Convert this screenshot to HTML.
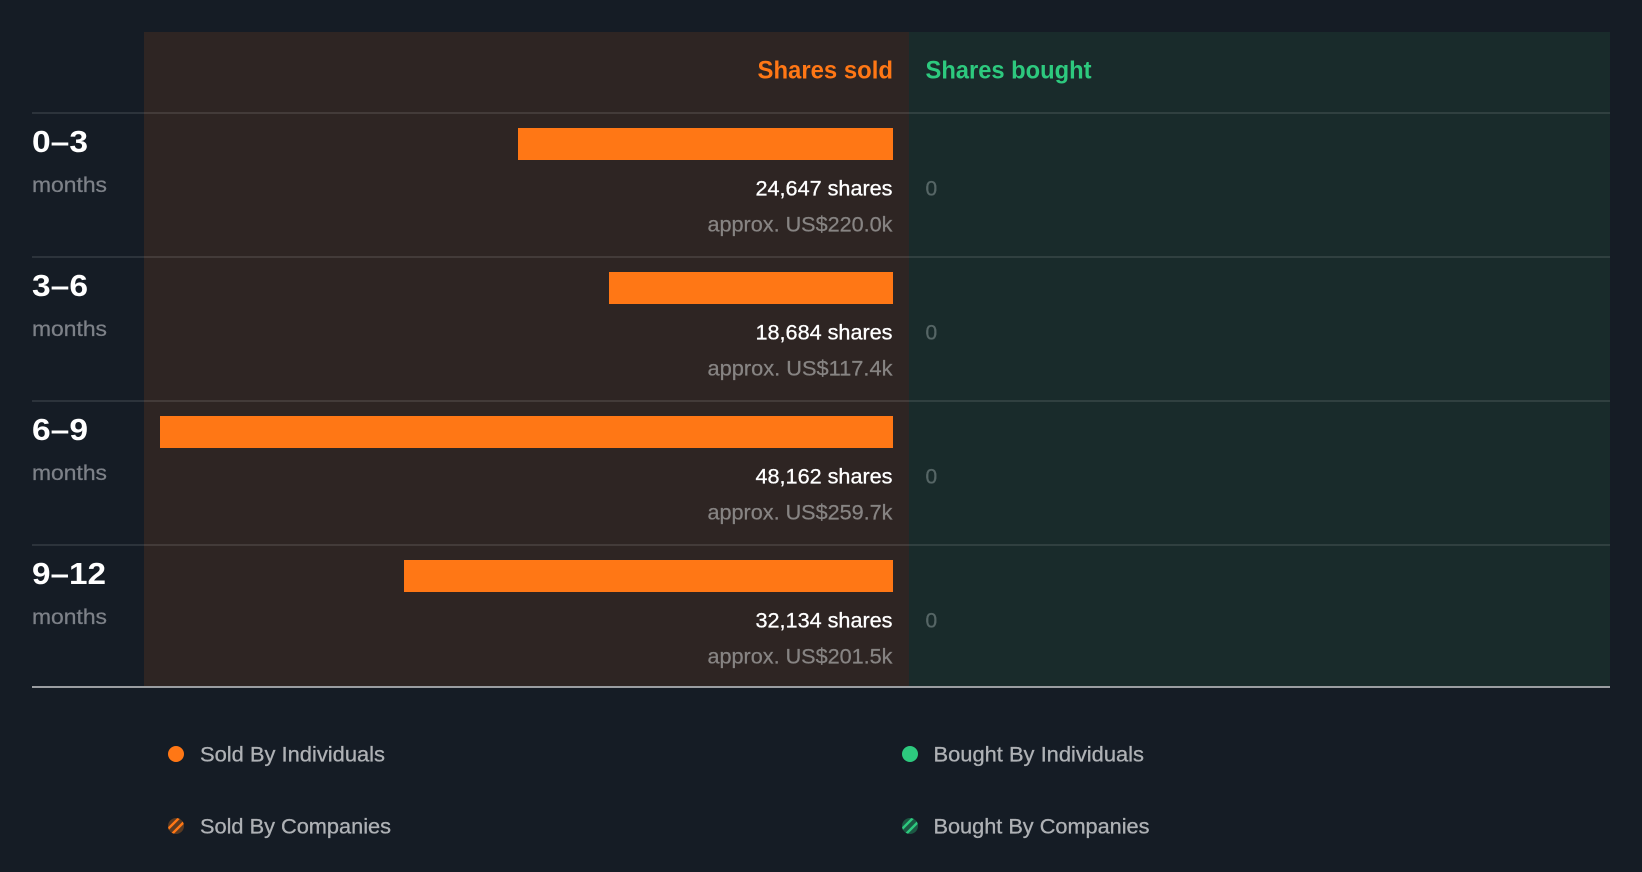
<!DOCTYPE html>
<html><head><meta charset="utf-8"><style>
html,body{margin:0;padding:0;background:#151c25;width:1642px;height:872px;overflow:hidden}
svg{display:block}
text{font-family:"Liberation Sans",sans-serif}
.h{font-size:25px;font-weight:bold}
.r{font-size:31px;font-weight:bold;fill:#fff}
.m{font-size:21px;fill:#7d8188;stroke:#7d8188;stroke-width:.25px}
.s{font-size:21px;fill:#fff;stroke:#fff;stroke-width:.3px}
.a{font-size:21px;fill:#878483;stroke:#878483;stroke-width:.25px}
.z{font-size:21px;fill:#566666;stroke:#566666;stroke-width:.3px}
.l{font-size:21px;fill:#aeb1b5;stroke:#aeb1b5;stroke-width:.3px}
</style></head><body>
<svg width="1642" height="872" viewBox="0 0 1642 872" xmlns="http://www.w3.org/2000/svg">
<defs>
<clipPath id="c1"><circle cx="176" cy="826" r="8"/></clipPath>
<clipPath id="c2"><circle cx="910" cy="826" r="8"/></clipPath>
</defs>
<rect width="1642" height="872" fill="#151c25"/>
<rect x="144" y="32" width="765" height="655" fill="#2e2523"/>
<rect x="909" y="32" width="701" height="655" fill="#192b2b"/>
<g fill="#fff" fill-opacity=".1">
<rect x="32" y="112" width="1578" height="2"/>
<rect x="32" y="256" width="1578" height="2"/>
<rect x="32" y="400" width="1578" height="2"/>
<rect x="32" y="544" width="1578" height="2"/>
</g>
<rect x="32" y="686" width="1578" height="2" fill="#9a9da1"/>

<text class="h" x="757.5" y="78.5" textLength="135.5" lengthAdjust="spacingAndGlyphs" fill="#ff7715">Shares sold</text>
<text class="h" x="925.5" y="78.5" textLength="166" lengthAdjust="spacingAndGlyphs" fill="#2dc97e">Shares bought</text>

<g fill="#ff7715">
<rect x="518" y="128" width="375" height="32"/>
<rect x="609" y="272" width="284" height="32"/>
<rect x="160" y="416" width="733" height="32"/>
<rect x="404" y="560" width="489" height="32"/>
</g>

<text class="r" x="32" y="152" textLength="56" lengthAdjust="spacingAndGlyphs">0–3</text>
<text class="m" x="32" y="192" textLength="75" lengthAdjust="spacingAndGlyphs">months</text>
<text class="s" x="755.5" y="195.5" textLength="137" lengthAdjust="spacingAndGlyphs">24,647 shares</text>
<text class="a" x="707.5" y="231.5" textLength="185" lengthAdjust="spacingAndGlyphs">approx. US$220.0k</text>
<text class="z" x="925.5" y="195.5">0</text>

<text class="r" x="32" y="296" textLength="56" lengthAdjust="spacingAndGlyphs">3–6</text>
<text class="m" x="32" y="336" textLength="75" lengthAdjust="spacingAndGlyphs">months</text>
<text class="s" x="755.5" y="339.5" textLength="137" lengthAdjust="spacingAndGlyphs">18,684 shares</text>
<text class="a" x="707.5" y="375.5" textLength="185" lengthAdjust="spacingAndGlyphs">approx. US$117.4k</text>
<text class="z" x="925.5" y="339.5">0</text>

<text class="r" x="32" y="440" textLength="56" lengthAdjust="spacingAndGlyphs">6–9</text>
<text class="m" x="32" y="480" textLength="75" lengthAdjust="spacingAndGlyphs">months</text>
<text class="s" x="755.5" y="483.5" textLength="137" lengthAdjust="spacingAndGlyphs">48,162 shares</text>
<text class="a" x="707.5" y="519.5" textLength="185" lengthAdjust="spacingAndGlyphs">approx. US$259.7k</text>
<text class="z" x="925.5" y="483.5">0</text>

<text class="r" x="32" y="584" textLength="74" lengthAdjust="spacingAndGlyphs">9–12</text>
<text class="m" x="32" y="624" textLength="75" lengthAdjust="spacingAndGlyphs">months</text>
<text class="s" x="755.5" y="627.5" textLength="137" lengthAdjust="spacingAndGlyphs">32,134 shares</text>
<text class="a" x="707.5" y="663.5" textLength="185" lengthAdjust="spacingAndGlyphs">approx. US$201.5k</text>
<text class="z" x="925.5" y="627.5">0</text>

<circle cx="176" cy="754" r="8" fill="#ff7715"/>
<circle cx="910" cy="754" r="8" fill="#2dc97e"/>
<g clip-path="url(#c1)">
<rect x="168" y="818" width="16" height="16" fill="#5a3a22"/>
<path d="M165.5 831.5L183.5 813.5M170.5 835.5L188.5 817.5" stroke="#ff7715" stroke-width="2.4" fill="none"/>
</g>
<g clip-path="url(#c2)">
<rect x="902" y="818" width="16" height="16" fill="#1c5743"/>
<path d="M899.5 831.5L917.5 813.5M904.5 835.5L922.5 817.5" stroke="#2dc97e" stroke-width="2.4" fill="none"/>
</g>

<text class="l" x="200" y="761.5" textLength="185" lengthAdjust="spacingAndGlyphs">Sold By Individuals</text>
<text class="l" x="200" y="833.5" textLength="191" lengthAdjust="spacingAndGlyphs">Sold By Companies</text>
<text class="l" x="933.5" y="761.5" textLength="210.5" lengthAdjust="spacingAndGlyphs">Bought By Individuals</text>
<text class="l" x="933.5" y="833.5" textLength="216" lengthAdjust="spacingAndGlyphs">Bought By Companies</text>
</svg>
</body></html>
